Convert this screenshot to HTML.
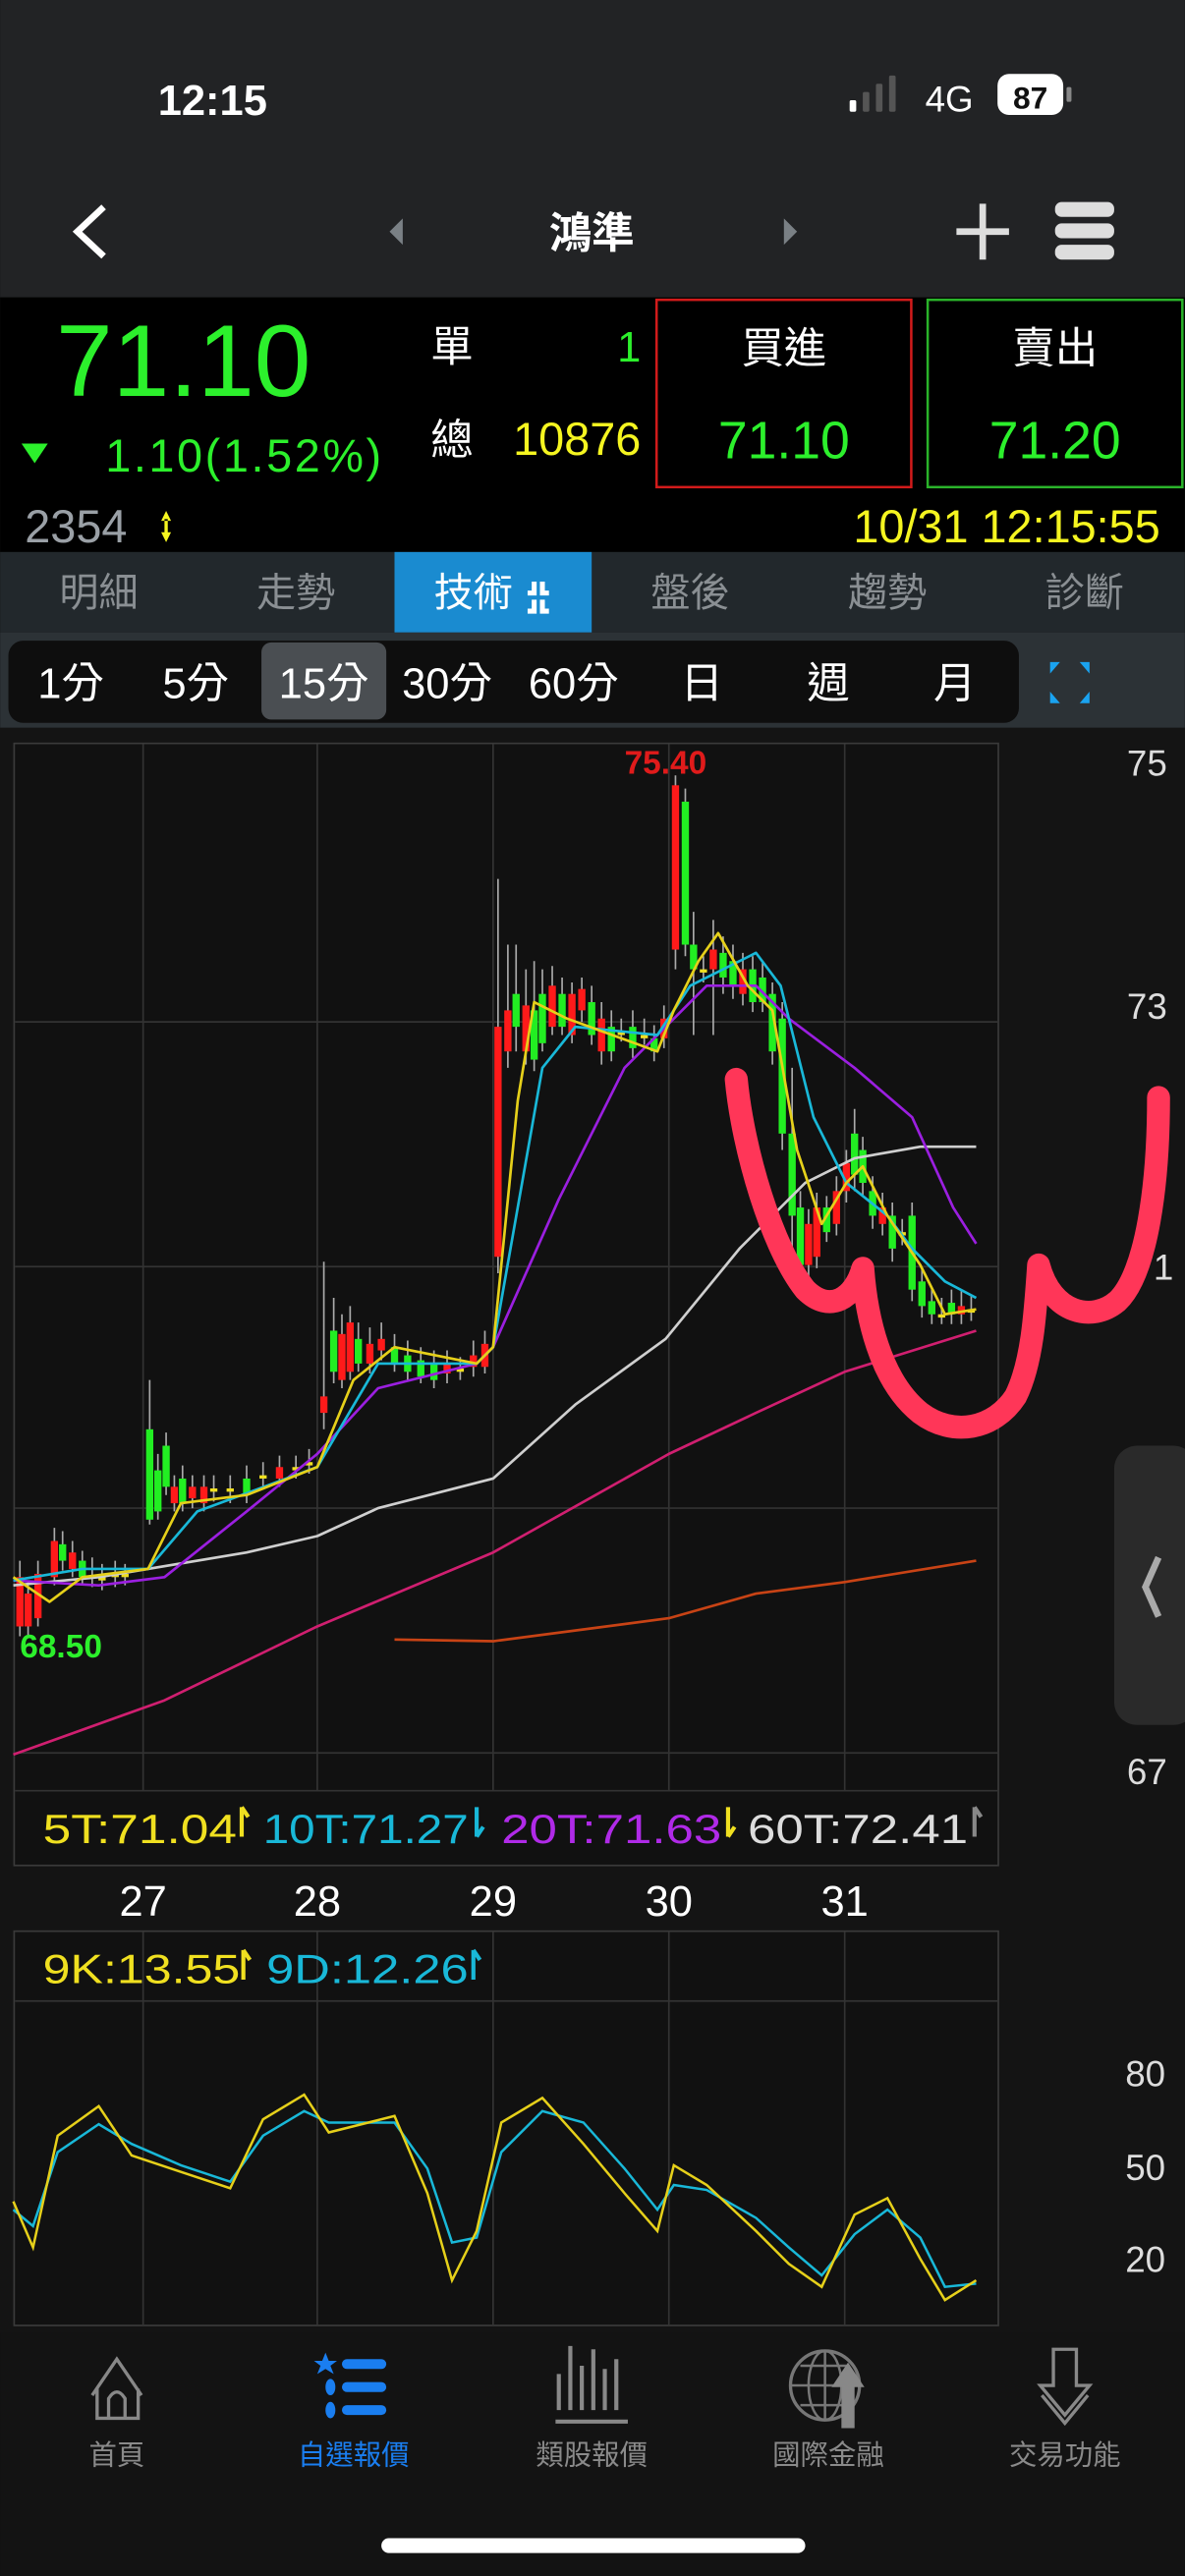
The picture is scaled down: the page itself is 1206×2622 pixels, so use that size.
<!DOCTYPE html>
<html><head><meta charset="utf-8">
<style>
html,body{margin:0;padding:0;background:#141414;}
body{width:1206px;height:2622px;overflow:hidden;}
svg{display:block;}
text{font-family:"Liberation Sans","Noto Sans CJK TC",sans-serif;}
</style></head>
<body>
<svg width="1206" height="2622" viewBox="0 0 721 1568" xmlns="http://www.w3.org/2000/svg">
<rect x="0" y="0" width="721" height="181" fill="#222325"/>
<text x="96" y="70" font-size="26" font-weight="bold" fill="#fff">12:15</text>
<rect x="517" y="61" width="4" height="7" rx="1" fill="#fff"/>
<rect x="525" y="56" width="4" height="12" rx="1" fill="#555"/>
<rect x="533" y="51" width="4" height="17" rx="1" fill="#555"/>
<rect x="541" y="46" width="4" height="22" rx="1" fill="#555"/>
<text x="563" y="68" font-size="22" fill="#fff">4G</text>
<rect x="607" y="45" width="40" height="25" rx="7" fill="#fff"/>
<rect x="649" y="53" width="3" height="9" rx="1" fill="#888"/>
<text x="627" y="66" font-size="19" font-weight="bold" fill="#111" text-anchor="middle">87</text>
<path d="M63 126 L47 141 L63 156" stroke="#fff" stroke-width="4" fill="none"/>
<path d="M245 133 L237 141 L245 149 Z" fill="#7a8085"/>
<path d="M477 133 L485 141 L477 149 Z" fill="#7a8085"/>
<text x="360" y="151" font-size="26" font-weight="bold" fill="#fff" text-anchor="middle">鴻準</text>
<path d="M598 124 V158 M582 141 H614" stroke="#ddd" stroke-width="4"/>
<rect x="642" y="123" width="36" height="9" rx="4" fill="#ddd"/>
<rect x="642" y="136" width="36" height="9" rx="4" fill="#ddd"/>
<rect x="642" y="149" width="36" height="9" rx="4" fill="#ddd"/>
<rect x="0" y="181" width="721" height="155" fill="#000"/>
<text x="34" y="241" font-size="62" fill="#2cf02c">71.10</text>
<path d="M13 270 L29 270 L21 282 Z" fill="#2cf02c"/>
<text x="64" y="287" font-size="28" fill="#2cf02c" textLength="168">1.10(1.52%)</text>
<text x="262" y="220" font-size="26" fill="#fff">單</text>
<text x="390" y="220" font-size="26" fill="#2cf02c" text-anchor="end">1</text>
<text x="262" y="277" font-size="26" fill="#fff">總</text>
<text x="390" y="277" font-size="28" fill="#f5f520" text-anchor="end">10876</text>
<rect x="399.5" y="182.5" width="155" height="114" fill="none" stroke="#d21b1b" stroke-width="1.5"/>
<rect x="564.5" y="182.5" width="155" height="114" fill="none" stroke="#2ab32a" stroke-width="1.5"/>
<text x="477" y="221" font-size="26" fill="#fff" text-anchor="middle">買進</text>
<text x="477" y="279" font-size="32" fill="#2cf02c" text-anchor="middle">71.10</text>
<text x="642" y="221" font-size="26" fill="#fff" text-anchor="middle">賣出</text>
<text x="642" y="279" font-size="32" fill="#2cf02c" text-anchor="middle">71.20</text>
<text x="15" y="330" font-size="28" fill="#9aa0a6">2354</text>
<path d="M101 311 L98 317 H104 Z M101 330 L98 324 H104 Z M100 316 h2 v9 h-2z" fill="#f5f520"/>
<text x="706" y="330" font-size="28" fill="#f5f520" text-anchor="end">10/31 12:15:55</text>
<rect x="0" y="336" width="721" height="49" fill="#22282c"/>
<rect x="240" y="336" width="120" height="49" fill="#1a8bd0"/>
<g font-size="24" fill="#8a8f93" text-anchor="middle">
<text x="60" y="369">明細</text><text x="180" y="369">走勢</text>
<text x="420" y="369">盤後</text><text x="540" y="369">趨勢</text><text x="660" y="369">診斷</text></g>
<text x="288" y="369" font-size="24" fill="#fff" text-anchor="middle">技術</text>
<path d="M325 354 v7 h-4 M325 365 v7 h-4 M330 354 v7 h4 M330 365 v7 h4" stroke="#fff" stroke-width="3" fill="none"/>
<rect x="0" y="385" width="721" height="58" fill="#2c3236"/>
<rect x="5" y="390" width="615" height="50" rx="9" fill="#0e0e0e"/>
<rect x="159" y="391" width="76" height="47" rx="6" fill="#4a4e52"/>
<g font-size="26" fill="#fff" text-anchor="middle">
<text x="43" y="425">1分</text><text x="119" y="425">5分</text><text x="197" y="425">15分</text>
<text x="272" y="425">30分</text><text x="349" y="425">60分</text><text x="427" y="425">日</text>
<text x="504" y="425">週</text><text x="581" y="425">月</text></g>
<path d="M639 403 h6 l-6 7 Z M663 403 h-6 l6 7 Z M639 428 h6 l-6 -7 Z M663 428 h-6 l6 -7 Z" fill="#1aa3f0"/>
<rect x="0" y="443" width="721" height="977" fill="#141414"/>
<rect x="8.5" y="452.5" width="599" height="683" fill="#111" stroke="#3a3a3a"/>
<g stroke="#333" stroke-width="1">
<path d="M87 453 V1090 M193 453 V1090 M300 453 V1090 M407 453 V1090 M514 453 V1090"/>
<path d="M9 622 H607 M9 771 H607 M9 918 H607 M9 1067 H607 M9 1090 H607"/>
</g>
<g font-size="22" fill="#ddd" text-anchor="middle">
<text x="698" y="472">75</text><text x="698" y="620">73</text><text x="708" y="779">1</text><text x="698" y="1086">67</text></g>
<!-- wicks -->
<path stroke="#aaa" stroke-width="1" fill="none" d="
M12 950V996 M17 962V996 M23 950V990 M33 930V965 M38 932V956 M44 938V960 M50 944V964 M56 948V966 M62 952V968 M70 950V966 M76 952V965
M91 840V928 M96 885V925 M101 872V910 M106 898V920 M111 892V920 M117 898V918 M124 898V920 M130 898V914 M140 898V915 M150 892V915 M160 890V905 M170 886V905 M180 886V900 M188 882V897
M197 768V870 M203 790V842 M208 800V845 M213 795V840 M218 805V835 M225 808V836 M232 805V828 M240 812V835 M248 816V840 M256 820V842 M264 822V845 M272 822V842 M280 826V840 M288 816V838 M295 810V836
M303 535V775 M309 575V650 M314 575V640 M320 590V648 M325 585V652 M330 590V640 M336 588V630 M342 595V630 M348 598V635 M354 595V622 M360 600V636 M366 610V648 M372 615V646 M378 620V634 M385 615V644 M392 620V636 M398 624V646 M404 612V638
M411 472V590 M417 480V582 M422 555V630 M428 582V598 M434 560V630 M440 570V605 M446 575V608 M452 580V612 M458 582V616 M464 586V616 M470 598V648 M476 610V700 M482 650V760 M487 725V778 M492 736V778 M497 726V772 M503 728V756 M509 716V752
M515 700V732 M520 675V725 M525 692V728 M531 716V748 M537 726V752 M543 732V768 M549 742V758 M555 732V792 M561 772V802 M567 784V806 M573 790V806 M579 785V806 M585 785V806 M591 788V804"/>
<!-- red bodies -->
<g fill="#ff1a1a">
<rect x="9.8" y="960" width="4.4" height="30"/><rect x="14.8" y="970" width="4.4" height="20"/><rect x="20.8" y="958" width="4.4" height="27"/><rect x="30.8" y="938" width="4.4" height="22"/><rect x="41.8" y="945" width="4.4" height="10"/>
<rect x="103.8" y="905" width="4.4" height="10"/><rect x="114.8" y="905" width="4.4" height="7"/><rect x="121.8" y="905" width="4.4" height="10"/><rect x="167.8" y="893" width="4.4" height="7"/>
<rect x="194.8" y="850" width="4.4" height="10"/><rect x="205.8" y="812" width="4.4" height="28"/><rect x="210.8" y="805" width="4.4" height="30"/><rect x="222.8" y="818" width="4.4" height="12"/><rect x="229.8" y="815" width="4.4" height="7"/><rect x="269.8" y="830" width="4.4" height="6"/><rect x="285.8" y="825" width="4.4" height="7"/><rect x="292.8" y="818" width="4.4" height="14"/>
<rect x="300.8" y="625" width="4.4" height="140"/><rect x="306.8" y="615" width="4.4" height="25"/><rect x="317.8" y="612" width="4.4" height="28"/><rect x="333.8" y="600" width="4.4" height="25"/><rect x="345.8" y="605" width="4.4" height="25"/><rect x="351.8" y="602" width="4.4" height="13"/><rect x="363.8" y="620" width="4.4" height="20"/><rect x="401.8" y="620" width="4.4" height="12"/>
<rect x="408.8" y="478" width="4.4" height="100"/><rect x="431.8" y="578" width="4.4" height="12"/><rect x="449.8" y="590" width="4.4" height="15"/><rect x="489.8" y="745" width="4.4" height="25"/><rect x="494.8" y="735" width="4.4" height="30"/><rect x="506.8" y="725" width="4.4" height="20"/>
<rect x="512.8" y="708" width="4.4" height="17"/><rect x="534.8" y="735" width="4.4" height="10"/><rect x="582.8" y="795" width="4.4" height="5"/>
</g>
<!-- green bodies -->
<g fill="#22ee22">
<rect x="35.8" y="940" width="4.4" height="10"/><rect x="47.8" y="950" width="4.4" height="10"/>
<rect x="88.8" y="870" width="4.4" height="55"/><rect x="93.8" y="895" width="4.4" height="25"/><rect x="98.8" y="880" width="4.4" height="25"/><rect x="108.8" y="900" width="4.4" height="15"/><rect x="147.8" y="900" width="4.4" height="10"/>
<rect x="200.8" y="810" width="4.4" height="25"/><rect x="215.8" y="815" width="4.4" height="15"/><rect x="237.8" y="820" width="4.4" height="10"/><rect x="245.8" y="825" width="4.4" height="10"/><rect x="253.8" y="828" width="4.4" height="10"/><rect x="261.8" y="830" width="4.4" height="10"/>
<rect x="311.8" y="605" width="4.4" height="20"/><rect x="322.8" y="615" width="4.4" height="30"/><rect x="327.8" y="605" width="4.4" height="30"/><rect x="339.8" y="605" width="4.4" height="20"/><rect x="357.8" y="610" width="4.4" height="20"/><rect x="369.8" y="625" width="4.4" height="15"/><rect x="382.8" y="625" width="4.4" height="13"/><rect x="395.8" y="632" width="4.4" height="8"/>
<rect x="414.8" y="488" width="4.4" height="87"/><rect x="419.8" y="575" width="4.4" height="15"/><rect x="437.8" y="580" width="4.4" height="15"/><rect x="443.8" y="585" width="4.4" height="15"/><rect x="455.8" y="590" width="4.4" height="20"/><rect x="461.8" y="595" width="4.4" height="15"/><rect x="467.8" y="605" width="4.4" height="35"/><rect x="473.8" y="620" width="4.4" height="70"/><rect x="479.8" y="690" width="4.4" height="50"/><rect x="484.8" y="735" width="4.4" height="35"/><rect x="500.8" y="735" width="4.4" height="15"/>
<rect x="517.8" y="690" width="4.4" height="25"/><rect x="522.8" y="700" width="4.4" height="20"/><rect x="528.8" y="725" width="4.4" height="15"/><rect x="540.8" y="740" width="4.4" height="20"/><rect x="552.8" y="740" width="4.4" height="45"/><rect x="558.8" y="780" width="4.4" height="15"/><rect x="564.8" y="792" width="4.4" height="8"/><rect x="576.8" y="793" width="4.4" height="7"/>
</g>
<g fill="#f0e020">
<rect x="59.8" y="960" width="4.4" height="2"/><rect x="67.8" y="958" width="4.4" height="2"/><rect x="73.8" y="958" width="4.4" height="2"/><rect x="127.8" y="906" width="4.4" height="2"/><rect x="137.8" y="906" width="4.4" height="2"/><rect x="157.8" y="898" width="4.4" height="2"/><rect x="177.8" y="893" width="4.4" height="2"/><rect x="185.8" y="890" width="4.4" height="2"/><rect x="277.8" y="833" width="4.4" height="2"/><rect x="375.8" y="628" width="4.4" height="2"/><rect x="389.8" y="630" width="4.4" height="2"/><rect x="425.8" y="590" width="4.4" height="2"/><rect x="546.8" y="750" width="4.4" height="2"/><rect x="570.8" y="800" width="4.4" height="2"/><rect x="588.8" y="797" width="4.4" height="2"/>
</g>
<g fill="none" stroke-width="1.6" stroke-linejoin="round">
<polyline stroke="#c84315" points="240,998 300,999 407,985 460,970 514,963 594,950"/>
<polyline stroke="#d01f70" points="8,1068 100,1035 193,990 300,945 407,885 460,860 514,835 594,810"/>
<polyline stroke="#cfcfcf" points="8,965 60,960 150,945 193,935 230,918 300,900 350,855 405,815 450,760 490,720 520,705 560,698 594,698"/>
<polyline stroke="#9b1fe0" points="8,962 60,965 100,960 150,920 193,885 230,845 290,830 300,820 340,730 380,650 410,620 430,600 460,600 480,620 520,650 555,680 580,735 594,757"/>
<polyline stroke="#19b8d8" points="8,962 50,955 90,955 120,920 193,893 230,830 290,830 300,820 330,650 350,625 400,630 420,600 460,580 475,600 495,680 515,720 540,740 555,760 575,780 594,790"/>
<polyline stroke="#e6d01a" points="8,960 30,975 50,960 90,955 110,915 150,910 193,893 215,840 240,820 290,830 300,820 315,670 325,610 345,620 400,640 410,615 425,585 437,568 455,600 470,615 485,700 500,745 515,720 525,710 540,740 560,770 575,800 594,797"/>
</g>
<text x="405" y="471" font-size="20" font-weight="bold" fill="#e01b1b" text-anchor="middle">75.40</text>
<text x="12" y="1009" font-size="20" font-weight="bold" fill="#2cf02c">68.50</text>
<path d="M448 657 C452 700 470 760 490 785 C505 800 520 790 525 772 C527 800 535 840 560 860 C580 875 605 870 618 850 C628 830 630 800 632 770 C640 800 665 805 680 792 C698 775 705 720 705 668" fill="none" stroke="#ff3658" stroke-width="14" stroke-linecap="round" stroke-linejoin="round"/>
<rect x="678" y="880" width="50" height="170" rx="14" fill="#2a2a2a"/>
<path d="M705 948 L697 966 L705 984" stroke="#aaa" stroke-width="4" fill="none"/>
<g font-size="25">
<text x="26" y="1122" fill="#f0e020" textLength="118" lengthAdjust="spacingAndGlyphs">5T:71.04</text>
<text x="160" y="1122" fill="#19b8d8" textLength="125" lengthAdjust="spacingAndGlyphs">10T:71.27</text>
<text x="305" y="1122" fill="#b02ae8" textLength="134" lengthAdjust="spacingAndGlyphs">20T:71.63</text>
<text x="455" y="1122" fill="#ddd" textLength="134" lengthAdjust="spacingAndGlyphs">60T:72.41</text></g>
<path d="M147 1100 v18 M147 1100 l4 6" stroke-width="2.5" fill="none" stroke="#f0e020"/>
<path d="M290 1100 v18 M290 1118 l4 -6" stroke-width="2.5" fill="none" stroke="#19b8d8"/>
<path d="M443 1100 v18 M443 1118 l4 -6" stroke-width="2.5" fill="none" stroke="#f0e020"/>
<path d="M593 1100 v18 M593 1100 l4 6" stroke-width="2.5" fill="none" stroke="#888"/>
<g font-size="26" fill="#fff" text-anchor="middle">
<text x="87" y="1166">27</text><text x="193" y="1166">28</text><text x="300" y="1166">29</text><text x="407" y="1166">30</text><text x="514" y="1166">31</text></g>
<rect x="8.5" y="1175.5" width="599" height="240" fill="#111" stroke="#3a3a3a"/>
<g stroke="#333"><path d="M87 1176 V1415 M193 1176 V1415 M300 1176 V1415 M407 1176 V1415 M514 1176 V1415 M9 1218 H607"/></g>
<g font-size="25"><text x="26" y="1207" fill="#f0e020" textLength="120" lengthAdjust="spacingAndGlyphs">9K:13.55</text><text x="162" y="1207" fill="#19b8d8" textLength="123" lengthAdjust="spacingAndGlyphs">9D:12.26</text></g>
<path d="M148 1187 v18 M148 1187 l4 6" stroke-width="2.5" fill="none" stroke="#f0e020"/>
<path d="M288 1187 v18 M288 1187 l4 6" stroke-width="2.5" fill="none" stroke="#19b8d8"/>
<g font-size="22" fill="#ddd" text-anchor="middle"><text x="697" y="1270">80</text><text x="697" y="1327">50</text><text x="697" y="1383">20</text></g>
<g fill="none" stroke-width="1.5">
<polyline stroke="#19b8d8" points="8,1345 20,1355 35,1310 60,1293 80,1305 110,1318 140,1328 160,1300 185,1285 200,1292 240,1292 260,1320 275,1365 290,1362 305,1310 330,1285 355,1292 380,1320 400,1345 410,1330 430,1333 460,1350 480,1368 500,1385 520,1360 540,1345 560,1362 575,1392 594,1390"/>
<polyline stroke="#e6d01a" points="8,1340 20,1368 35,1300 60,1282 80,1312 110,1322 140,1332 160,1290 185,1275 200,1298 240,1288 260,1335 275,1388 290,1358 305,1292 330,1277 355,1305 380,1335 400,1358 410,1318 430,1330 460,1358 480,1378 500,1392 520,1348 540,1338 560,1375 575,1400 594,1388"/>
</g>
<rect x="0" y="1420" width="721" height="148" fill="#131313"/>
<path d="M56 1458 L71 1436 L86 1458 M59 1454 V1472 H84 V1454 M66 1472 V1460 Q71 1452 76 1460 V1472" stroke="#888" stroke-width="2" fill="none"/>
<path d="M198 1432 l2 5 5 0 -4 3 2 5 -5-3 -5 3 2-5 -4-3 5 0z" fill="#1a7ef0"/>
<rect x="208" y="1436" width="27" height="6" rx="3" fill="#1a7ef0"/>
<rect x="208" y="1450" width="27" height="6" rx="3" fill="#1a7ef0"/>
<rect x="208" y="1464" width="27" height="6" rx="3" fill="#1a7ef0"/>
<ellipse cx="201" cy="1453" rx="3" ry="5" fill="#1a7ef0"/><ellipse cx="201" cy="1467" rx="3" ry="5" fill="#1a7ef0"/>
<path d="M340 1445 V1467 M347 1428 V1467 M354 1440 V1467 M361 1430 V1467 M368 1442 V1467 M375 1436 V1467 M338 1474 H382" stroke="#888" stroke-width="2.5"/>
<circle cx="502" cy="1452" r="21" fill="none" stroke="#777" stroke-width="2"/>
<path d="M481 1452 H523 M502 1431 V1473 M487 1440 H517 M487 1464 H517" stroke="#777" stroke-width="1.5"/>
<ellipse cx="502" cy="1452" rx="10" ry="21" fill="none" stroke="#777" stroke-width="1.5"/>
<path d="M506 1453 L516 1438 L526 1453 H520 V1478 H512 V1453 Z" fill="#888"/>
<path d="M641 1430 H655 V1452 H663 L648 1470 L633 1452 H641 Z M634 1458 L648 1475 L662 1458" stroke="#888" stroke-width="2" fill="none"/>
<g font-size="17" fill="#8a8a8a" text-anchor="middle">
<text x="71" y="1500">首頁</text><text x="360" y="1500">類股報價</text><text x="504" y="1500">國際金融</text><text x="648" y="1500">交易功能</text></g>
<text x="215" y="1500" font-size="17" fill="#1a7ef0" text-anchor="middle">自選報價</text>
<rect x="232" y="1545" width="258" height="9" rx="4.5" fill="#fff"/>
</svg>
</body></html>
